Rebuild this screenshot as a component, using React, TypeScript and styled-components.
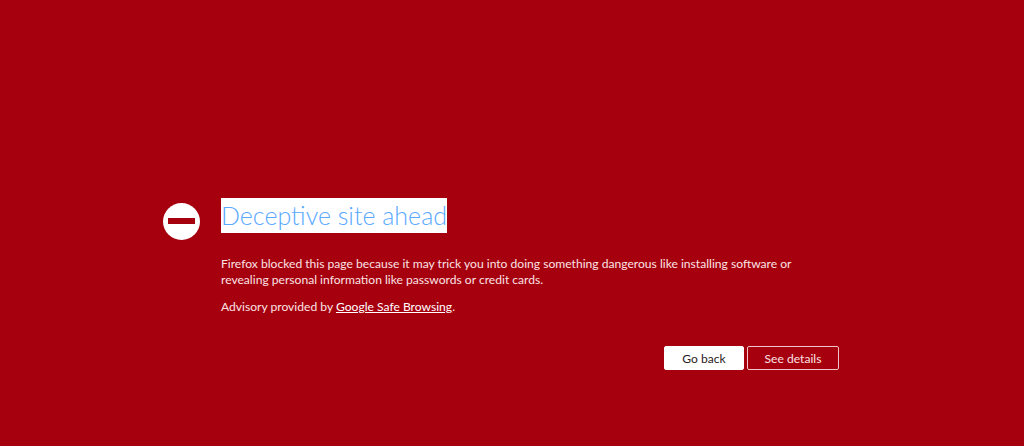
import React from "react";
import styled, { createGlobalStyle } from "styled-components";

const Global = createGlobalStyle`
  html, body { margin: 0; padding: 0; height: 100%; background: #a6000f; }
  #root { height: 100%; }
`;

const Page = styled.main`
  box-sizing: border-box;
  width: 1024px;
  height: 446px;
  overflow: hidden;
  background: #a6000f;
  padding: 198px 0 0 163px;
  font-family: Lato, "Open Sans", sans-serif;
  color: #fbe3e3;
`;

const Container = styled.div`
  display: flex;
  width: 676px;
`;

const IconColumn = styled.div`
  flex: 0 0 58px;
  padding-top: 5px;
`;

const Content = styled.div`
  flex: 1;
  display: flex;
  flex-direction: column;
`;

const Heading = styled.h1`
  margin: 0;
  font-weight: 300;
  font-size: 25px;
  line-height: 35px;
  height: 35px;
`;

const Selected = styled.span`
  display: inline-block;
  background: #ffffff;
  color: #5aa9ff;
  width: 226px;
  white-space: nowrap;
`;

const Paragraph = styled.p<{ $top: number }>`
  margin: ${(p) => p.$top}px 0 0;
  width: 600px;
  font-size: 12.1px;
  line-height: 16px;
`;

const LinkText = styled.a`
  color: #ffffff;
  text-decoration: underline;
`;

const Actions = styled.div`
  display: flex;
  justify-content: flex-end;
  gap: 3px;
  margin-top: 31px;
`;

const Button = styled.button<{ $primary?: boolean }>`
  box-sizing: border-box;
  height: 24px;
  width: ${(p) => (p.$primary ? 80 : 92)}px;
  padding: 0;
  border-radius: 2px;
  border: 1px solid ${(p) => (p.$primary ? "#ffffff" : "#f0c4c8")};
  background: ${(p) => (p.$primary ? "#ffffff" : "transparent")};
  color: ${(p) => (p.$primary ? "#2a1a1c" : "#fbe3e3")};
  font-family: inherit;
  font-size: 12.1px;
`;

const BlockedIcon = () => (
  <svg width="37" height="37" viewBox="0 0 37 37" aria-hidden="true">
    <circle cx="18.5" cy="18.5" r="18.5" fill="#ffffff" />
    <rect x="5" y="15" width="27" height="6" fill="#a6000f" />
  </svg>
);

export default function App() {
  return (
    <Page>
      <Global />
      <Container>
        <IconColumn>
          <BlockedIcon />
        </IconColumn>
        <Content>
          <Heading>
            <Selected>Deceptive site ahead</Selected>
          </Heading>
          <Paragraph $top={23}>
            Firefox blocked this page because it may trick you into doing something dangerous like
            installing software or revealing personal information like passwords or credit cards.
          </Paragraph>
          <Paragraph $top={11}>
            Advisory provided by <LinkText href="#">Google Safe Browsing</LinkText>.
          </Paragraph>
          <Actions>
            <Button $primary>Go back</Button>
            <Button>See details</Button>
          </Actions>
        </Content>
      </Container>
    </Page>
  );
}
